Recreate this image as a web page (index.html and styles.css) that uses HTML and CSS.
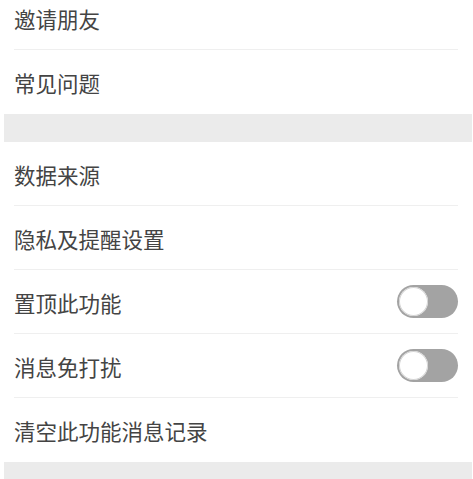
FILE: index.html
```html
<!DOCTYPE html>
<html lang="zh-CN">
<head>
<meta charset="utf-8">
<title>设置</title>
<link rel="stylesheet" href="styles.css">
</head>
<body>
<div class="page">
  <div class="group">
    <div class="row"><span class="label">邀请朋友</span></div>
    <div class="row last"><span class="label">常见问题</span></div>
  </div>
  <div class="gap"></div>
  <div class="group">
    <div class="row"><span class="label">数据来源</span></div>
    <div class="row"><span class="label">隐私及提醒设置</span></div>
    <div class="row"><span class="label">置顶此功能</span><span class="switch"><span class="knob"></span></span></div>
    <div class="row"><span class="label">消息免打扰</span><span class="switch"><span class="knob"></span></span></div>
    <div class="row last"><span class="label">清空此功能消息记录</span></div>
  </div>
  <div class="gap"></div>
</div>
</body>
</html>
```
FILE: styles.css
```css
html, body {
  margin: 0;
  padding: 0;
  background: #ffffff;
}
body {
  font-family: "Noto Sans CJK SC", "Noto Sans", sans-serif;
  color: #333333;
  overflow: hidden;
}
.page {
  display: flex;
  flex-direction: column;
  margin-top: -14px;
}
.group {
  display: flex;
  flex-direction: column;
  padding: 0 15px 0 14px;
}
.row {
  height: 63px;
  border-bottom: 1px solid #efefef;
  display: flex;
  align-items: center;
  justify-content: space-between;
}
.row.last {
  border-bottom: none;
  height: 64px;
}
.label {
  font-size: 21.5px;
  line-height: 1;
  padding-top: 2px;
  color: #444444;
}
.gap {
  height: 28px;
  background: #ebebeb;
  margin: 0 1px 0 4px;
}
.switch {
  width: 61px;
  height: 33px;
  border-radius: 17px;
  background: #a3a3a3;
  display: flex;
  align-items: center;
  padding-left: 2px;
  box-sizing: border-box;
}
.knob {
  width: 29px;
  height: 29px;
  border-radius: 50%;
  background: #ffffff;
  box-shadow: inset 0 0 0 1px #d4d4d4;
}
```
